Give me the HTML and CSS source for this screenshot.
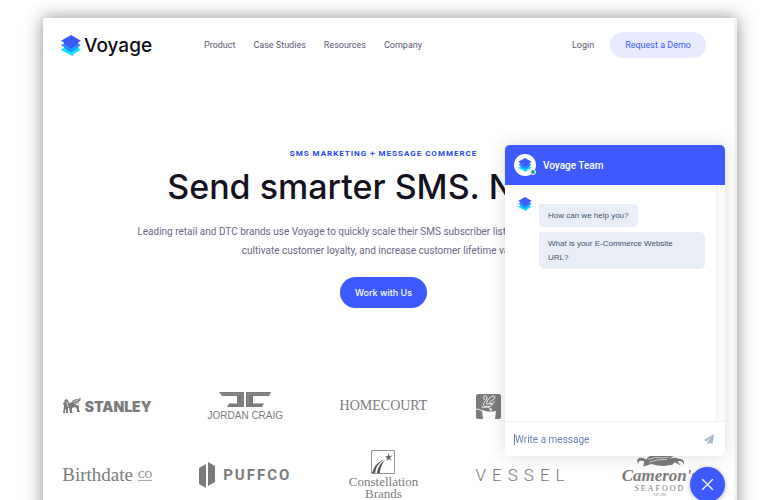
FILE: index.html
```html
<!DOCTYPE html>
<html lang="en">

<head>
  <meta charset="UTF-8">
  <meta name="viewport" content="width=device-width, initial-scale=1.0">
  <title>Voyage | SMS Marketing</title>
  <link rel="stylesheet" href="styles.css">
</head>

<body>
  <svg width="0" height="0" class="defs" aria-hidden="true">
    <symbol id="stack" viewBox="0 0 20 21">
      <path d="m0 14.500 3-1.500 7 3 7-3 3 1.500-7.500 4.500-1 2L0 15z" fill="#0de0ff" />
      <path d="m0 10 3-1.500 7 3 7-3 3 1.500-3 2 0 1-7 4.500-7-4.500 0-1z" fill="#1b95ff" />
      <path d="M0 5.700 10 0l10 5.700-3 2v1.500l-5 3-2 1-7-4.300V7.700z" fill="#3d5afe" />
    </symbol>
  </svg>

  <div class="page">
    <header class="header">
      <a class="logo" href="#"><svg class="logo-mark" aria-hidden="true"><use href="#stack" /></svg>Voyage</a>
      <nav class="nav">
        <a href="#">Product</a>
        <a href="#">Case Studies</a>
        <a href="#">Resources</a>
        <a href="#">Company</a>
      </nav>
      <a class="login" href="#">Login</a>
      <a class="demo" href="#">Request a Demo</a>
    </header>

    <main>
      <section class="hero">
        <p class="eyebrow">SMS Marketing + Message Commerce</p>
        <h1>Send smarter SMS. Nicely.</h1>
        <p class="lead">Leading retail and DTC brands use Voyage to quickly scale their SMS subscriber lists, drive much more revenue,<br>cultivate customer loyalty, and increase customer lifetime value.</p>
        <button class="work" type="button">Work with Us</button>
      </section>

      <section class="brands">
        <div class="brand stanley">
          <svg width="18" height="16" viewBox="0 0 18 16" aria-hidden="true">
            <path d="M1 3 3 1l2 1 1 3 3-1 1-2 8-2-1 3-2 1 1 1-3 1v1l3 1v4l1 2h-3l0-3-2-2-3 1v4l1 1H7l-1-5-1 0v5H3l0-4-1 1v3H0l1-7-1-3 2-1z" fill="currentColor" />
            <path d="m10 4 6-2.500M11 6l4-1.500M3 4l2 1-1 2 2 2" stroke="#fff" stroke-width=".6" fill="none" />
          </svg>
          <span>STANLEY</span>
        </div>
        <div class="brand craig">
          <svg width="52" height="16" viewBox="0 0 52 16" aria-hidden="true">
            <path d="M0 0h25v15H8l2-3.500h8V4H3zM52 0H27v15h16l2-3.500H34V4h16z" fill="currentColor" />
            <path d="M2 2h21v11M50 2H29v11" stroke="#aaa" stroke-width=".5" fill="none" />
          </svg>
          <span>JORDAN CRAIG</span>
        </div>
        <div class="brand homecourt">HOMECOURT</div>
        <div class="brand crest">
          <svg width="25" height="25" viewBox="0 0 25 25" aria-hidden="true">
            <path d="M2 0h21q2 0 2 2v21q0 2-2 2h-4l1-8q-7 2-14-1l1 9H2q-2 0-2-2V2q0-2 2-2z" fill="currentColor" />
            <path d="M0 15q4 0 6 2M9 6c-4-4 2-6 2-2 0 3-5 4-3 8 2 2 9 0 8-2-2-2-7 3-5-2 1-4 7-8 8-5 0 3-6 4-5 6 1 3 5-1 4-2M6 12c-1 3 5 0 7 1l2 4m0-3q1 3-1 3" stroke="#fff" stroke-width=".9" fill="none" />
          </svg>
        </div>
        <div class="brand"></div>
        <div class="brand birthdate">Birthdate <span>CO</span></div>
        <div class="brand puffco">
          <svg width="16" height="26" viewBox="0 0 16 26" aria-hidden="true">
            <path d="M0 6 7 2v24l-7-4zM9 0l7 4v16l-7 4z" fill="currentColor" />
          </svg>
          <span>PUFFCO</span>
        </div>
        <div class="brand constellation">
          <svg width="24" height="24" viewBox="0 0 24 24" aria-hidden="true">
            <path d="M.5.500h23v23H.5z" stroke="currentColor" stroke-width=".8" fill="none" />
            <path d="M1 23Q4 13 13 9 5 15 4 23zM6 23q1-9 8-13-5 6-5 13z" fill="#555" />
            <path d="m17.500 3 1 3 3-.5-2.500 2 1.500 3-2.500-1.500-2.500 2 .8-3L14 6.500l2.800-.5z" fill="#666" />
          </svg>
          <span>Constellation<br>Brands</span>
        </div>
        <div class="brand vessel">VESSEL</div>
        <div class="brand camerons">
          <svg width="56" height="14" viewBox="0 0 64 15" aria-hidden="true">
            <path d="M14 9q-8-3-6 4-5-7 2-8 4 0 6 2Q22-1 34 2l12-2-6 3 9-1-7 4q8-2 11 0 8 0 6 7-1-6-7-4l4 5-7-4-3 3q-12 3-24-1l-6 2-3 1z" fill="currentColor" />
            <path d="M18 7q8-4 18-2l6-1M20 10q9-4 20-3" stroke="#fff" stroke-width=".8" fill="none" />
          </svg>
          <b>Cameron's</b>
          <span>SEAFOOD</span>
          <small>EST. 1985</small>
        </div>
      </section>
    </main>
  </div>

  <aside class="chat">
    <header class="chat-head">
      <span class="avatar"><svg aria-hidden="true"><use href="#stack" /></svg><i class="online"></i></span>
      <h2>Voyage Team</h2>
    </header>
    <div class="chat-body">
      <svg class="sender" aria-hidden="true"><use href="#stack" /></svg>
      <div class="messages">
        <p>How can we help you?</p>
        <p>What is your E-Commerce Website URL?</p>
      </div>
    </div>
    <form class="chat-form">
      <input type="text" placeholder="Write a message" aria-label="Write a message">
      <button type="button" aria-label="Send">
        <svg width="10" height="11" viewBox="0 0 10 11" aria-hidden="true">
          <path d="M10 0 0 6l2.500 1.200L8 2.500 3.700 7.800V11l1.800-2.300 3 1.300z" fill="currentColor" />
        </svg>
      </button>
    </form>
  </aside>
  <button class="launcher" type="button" aria-label="Close chat">
    <svg width="11" height="11" viewBox="0 0 11 11" aria-hidden="true">
      <path d="m.5.500 10 10m0-10-10 10" stroke="#fff" stroke-width="1.300" stroke-linecap="round" />
    </svg>
  </button>
</body>

</html>
```

FILE: styles.css
```css
* {
  box-sizing: border-box;
}

body {
  margin: 0;
  height: 100vh;
  overflow: hidden;
  background: #fff;
  color: #5b5776;
  font-family: Inter, "Liberation Sans", sans-serif;
}

h1, h2, p {
  margin: 0;
}

a {
  color: inherit;
  text-decoration: none;
}

button {
  border: 0;
  font-family: inherit;
}

.defs {
  position: absolute;
}

.page {
  margin: 18px 31px 0 43px;
  min-height: 100vh;
  border-right: 3px solid #f3f3f3;
  background: #fff;
  box-shadow: 0 0 17px rgba(0, 0, 0, .45);
}

/* header */

.header {
  display: flex;
  align-items: center;
  height: 54px;
  padding: 0 28px 0 18px;
  font-family: Roboto, sans-serif;
  font-size: 9px;
}

.logo {
  display: flex;
  align-items: center;
  gap: 3px;
  width: 143px;
  color: #0b0b10;
  font-family: Inter, sans-serif;
  font-size: 19px;
  font-weight: 500;
}

.logo-mark {
  width: 20px;
  height: 21px;
}

.nav {
  display: flex;
  gap: 18px;
}

.login {
  margin-left: auto;
}

.demo {
  margin-left: 16px;
  padding: 0 15px;
  border-radius: 13px;
  background: #e8ebff;
  color: #3d5afe;
  line-height: 26px;
}

/* hero */

.hero {
  display: flex;
  flex-direction: column;
  align-items: center;
  padding: 76px 28px 0 18px;
  text-align: center;
}

.eyebrow {
  color: #2746f5;
  font-family: Roboto, sans-serif;
  font-size: 8px;
  font-weight: 700;
  letter-spacing: 1px;
  line-height: 12px;
  text-transform: uppercase;
}

h1 {
  margin-top: 4px;
  color: #14121f;
  font-size: 34px;
  font-weight: 500;
  line-height: 46px;
  white-space: nowrap;
}

.lead {
  margin-top: 12px;
  color: #6c6884;
  font-family: Roboto, sans-serif;
  font-size: 10px;
  line-height: 19px;
  white-space: nowrap;
}

.work {
  margin-top: 17px;
  padding: 0 15px;
  height: 31px;
  border-radius: 16px;
  background: #3d5afe;
  color: #fff;
  font-size: 9px;
  font-weight: 500;
}

/* brand logos */

.brands {
  display: grid;
  grid-template-columns: repeat(5, 1fr);
  grid-template-rows: 28px 50px;
  gap: 30px 46px;
  align-items: center;
  padding: 84px 28px 0 18px;
  color: #7b7b7b;
}

.brand {
  display: flex;
  align-items: center;
  justify-content: center;
  min-width: 0;
  white-space: nowrap;
}

.stanley {
  gap: 4px;
  font-size: 14px;
  font-weight: 900;
}

.craig {
  flex-direction: column;
  gap: 3px;
  font: 10px/10px "Liberation Sans", sans-serif;
}

.homecourt {
  font: 14px "Liberation Serif", serif;
}

.crest {
  justify-content: flex-start;
}

.birthdate {
  gap: 5px;
  font: 19px "Liberation Serif", serif;
}

.birthdate span {
  border-bottom: 1px solid #aaa;
  font-size: 10px;
  line-height: 10px;
}

.puffco {
  gap: 8px;
  font: 700 15px Roboto, sans-serif;
  letter-spacing: 2px;
}

.constellation {
  flex-direction: column;
  gap: 2px;
  font: 13px/12px "Liberation Serif", serif;
  text-align: center;
}

.vessel {
  justify-content: flex-start;
  font: 17px Roboto, sans-serif;
  font-weight: 300;
  letter-spacing: 6px;
}

.camerons {
  flex-direction: column;
  font-family: "Liberation Serif", serif;
}

.camerons b {
  font-size: 17px;
  font-style: italic;
  line-height: 17px;
}

.camerons span {
  font-size: 8px;
  letter-spacing: 2px;
  line-height: 9px;
}

.camerons small {
  font-size: 3px;
  line-height: 4px;
}

/* chat widget */

.chat {
  position: fixed;
  top: 145px;
  right: 43px;
  display: flex;
  flex-direction: column;
  width: 220px;
  height: 311px;
  overflow: hidden;
  border-radius: 5px;
  background: #fff;
  box-shadow: 0 0 18px rgba(0, 0, 0, .14);
  font-family: Roboto, sans-serif;
}

.chat-head {
  display: flex;
  align-items: center;
  gap: 7px;
  height: 40px;
  padding: 0 9px;
  background: #3d5afe;
  color: #fff;
}

.chat-head h2 {
  font-size: 10px;
  font-weight: 500;
}

.avatar {
  position: relative;
  display: grid;
  place-items: center;
  width: 22px;
  height: 22px;
  border-radius: 50%;
  background: #fff;
}

.avatar svg, .sender {
  width: 14px;
  height: 14px;
}

.online {
  position: absolute;
  right: 0;
  bottom: 1px;
  width: 6px;
  height: 6px;
  border: 1px solid #fff;
  border-radius: 50%;
  background: #17b28a;
}

.chat-body {
  display: flex;
  flex: 1;
  gap: 7px;
  margin-right: 9px;
  padding: 12px 11px 0 13px;
  box-shadow: 1px 0 #f3f3f3, 9px 0 #fafafa;
}

.messages {
  display: flex;
  flex: 1;
  flex-direction: column;
  align-items: flex-start;
  gap: 5px;
  padding-top: 7px;
}

.messages p {
  padding: 5px 9px 4px;
  border-radius: 2px 5px 5px 5px;
  background: #e9eef6;
  color: #43536d;
  font-family: "Liberation Sans", sans-serif;
  font-size: 8px;
  line-height: 14px;
}

.messages p:last-child {
  padding-right: 27px;
}

.chat-form {
  display: flex;
  align-items: center;
  height: 35px;
  padding: 0 11px 0 9px;
  border-top: 1px solid #eee;
}

.chat-form input {
  flex: 1;
  min-width: 0;
  padding: 0;
  border: 0;
  border-left: 1px solid #777;
  outline: 0;
  font: 10px Roboto, sans-serif;
}

.chat-form input::placeholder {
  color: #6685b3;
}

.chat-form button {
  display: flex;
  padding: 0;
  background: none;
  color: #a5b6ce;
}

.launcher {
  position: fixed;
  top: 467px;
  right: 43px;
  display: grid;
  place-items: center;
  width: 35px;
  height: 35px;
  padding: 0;
  border-radius: 50%;
  background: #3d5afe;
  box-shadow: 0 1px 5px rgba(0, 0, 0, .3);
}
```
